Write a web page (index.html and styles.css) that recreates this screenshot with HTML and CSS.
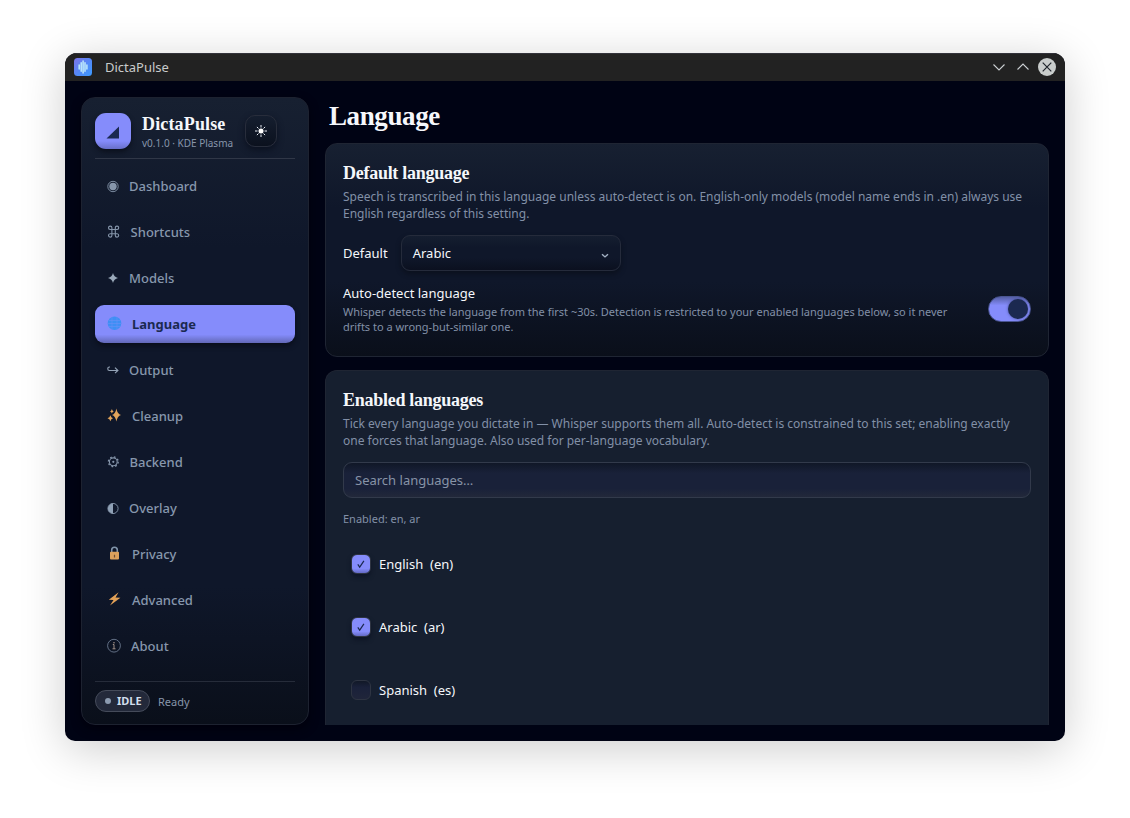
FILE: index.html
```html
<!DOCTYPE html>
<html lang="en">
<head>
<meta charset="utf-8">
<title>DictaPulse</title>
<link rel="stylesheet" href="styles.css">
</head>
<body>
<div class="window">
  <header class="titlebar">
    <svg class="app-icon" width="18" height="18" viewBox="0 0 18 18">
      <defs><linearGradient id="g" x1="0" y1="0" x2="1" y2="1"><stop offset="0" stop-color="#7d74e8"/><stop offset=".55" stop-color="#5289f8"/><stop offset="1" stop-color="#3c9bff"/></linearGradient></defs>
      <rect width="18" height="18" rx="3.5" fill="url(#g)"/>
      <path d="M5.2 7v4M7.2 4.8v8.4M9.1 3v12M11 4.8v8.4M12.9 7v4" stroke="#b8e4fb" stroke-width="1.6" stroke-linecap="round"/>
    </svg>
    <span class="window-name">DictaPulse</span>
    <div class="controls">
      <svg width="18" height="18" viewBox="0 0 18 18"><path d="M3.5 6.5 9 12l5.500-5.500" class="line"/></svg>
      <svg width="18" height="18" viewBox="0 0 18 18"><path d="M3.500 11.500 9 6l5.500 5.500" class="line"/></svg>
      <svg width="18" height="18" viewBox="0 0 18 18"><circle cx="9" cy="9" r="9" fill="#c9cdcc"/><path d="m4.700 4.700 8.600 8.600m0-8.600-8.600 8.600" stroke="#20252d" stroke-width="1.200"/></svg>
    </div>
  </header>
  <div class="body">
    <aside class="sidebar">
      <div class="brand">
        <div class="logo"><svg width="14" height="14" viewBox="0 0 14 14"><path d="M13 .5v12H.5z" fill="#1b2950"/></svg></div>
        <div class="brand-text"><div class="brand-name">DictaPulse</div><div class="version">v0.1.0 · KDE Plasma</div></div>
        <div class="theme"><svg width="14" height="14" viewBox="0 0 14 14"><circle cx="7" cy="7" r="2.500" fill="#fff"/><path d="M7 1v2.500M7 10.500V13M1 7h2.500M10.500 7H13M2.900 2.900l1.600 1.600M9.500 9.500l1.600 1.600M2.900 11.100l1.600-1.600M9.500 4.500l1.600-1.600" stroke="#e8edf5" stroke-width="1"/></svg></div>
      </div>
      <nav class="nav">
        <div class="item"><svg class="i12" viewBox="0 0 12 14"><circle cx="6" cy="7.500" r="5.200" fill="none" stroke="#8696ab" stroke-width=".9"/><circle cx="6" cy="7.500" r="3.700" fill="#8696ab"/></svg>Dashboard</div>
        <div class="item"><svg class="i13" viewBox="0 0 13 14"><path d="M4.900 4.500h3.400v4.200H4.900zM4.900 4.500H3.100a1.700 1.700 0 1 1 1.800-1.700zM8.300 4.500V2.800a1.700 1.700 0 1 1 1.800 1.700zM8.300 8.700h1.800a1.700 1.700 0 1 1-1.800 1.700zM4.900 8.700v1.700a1.700 1.700 0 1 1-1.800-1.700z" fill="none" stroke="#8696ab" stroke-width="1.100"/></svg><span class="shift">Shortcuts</span></div>
        <div class="item"><svg class="i12" viewBox="0 0 12 14"><path d="M6 2Q6.900 6.100 11 7 6.900 7.900 6 12 5.100 7.900 1 7 5.100 6.100 6 2z" fill="#9aa9ba"/></svg>Models</div>
        <div class="item active"><svg class="i15" viewBox="0 0 15 14"><circle cx="7.500" cy="6.200" r="6.800" fill="#3e8ff5"/><path d="M2 3.500h11M1 6.500h13M2 9.500h11M5 0v12.500M10 0v12.500" fill="none" stroke="#6c91f8" stroke-width=".55"/></svg>Language</div>
        <div class="item"><svg class="i12" viewBox="0 0 12 14"><path d="M3 4H2.500a1.700 1.700 0 0 0 0 3.500h8M8 4.600l2.900 2.900L8 10.100" fill="none" stroke="#94a3b6" stroke-width="1.150"/></svg>Output</div>
        <div class="item"><svg class="i15" viewBox="0 0 15 14"><g fill="#e2a45b"><path d="M9.400-.5Q10.200 4.800 14 6 10.200 7.200 9.400 12.600 8.500 7.200 5 6 8.500 4.800 9.400-.5z"/><path d="M4.900.1Q5.200 1.900 6.700 2.400 5.200 3 4.900 4.600 4.500 3 3.100 2.400 4.500 1.900 4.900.1zM3.400 6.300Q4 8.600 6 9.200 4 9.800 3.400 12.300 2.800 9.800.5 9.200 2.800 8.600 3.400 6.300z"/></g></svg>Cleanup</div>
        <div class="item"><svg class="i13" viewBox="0 0 13 14"><circle cx="6.300" cy="6.800" r="3.900" fill="none" stroke="#8696ab" stroke-width="1.100"/><circle cx="6.300" cy="6.800" r="1.100" fill="#8696ab"/><circle cx="6.300" cy="6.800" r="4.900" fill="none" stroke="#8696ab" stroke-width="1.300" stroke-dasharray="1.700 2.148"/></svg><span class="pull">Backend</span></div>
        <div class="item"><svg class="i12" viewBox="0 0 12 14"><circle cx="6" cy="7.500" r="5.100" fill="none" stroke="#8696ab" stroke-width=".9"/><path d="M6 2.400a5.100 5.100 0 0 0 0 10.200z" fill="#8fa1b6"/></svg>Overlay</div>
        <div class="item"><svg class="i15" viewBox="0 0 15 14"><path d="M4.700 5.500V3a2.800 2.800 0 0 1 5.600 0v2.500" fill="none" stroke="#8094aa" stroke-width="1.600"/><rect x="3" y="4.800" width="9" height="7.800" rx="1" fill="#dda15c"/><path d="M7.500 7.700v2.800" stroke="#704d30" stroke-width="1.200"/></svg>Privacy</div>
        <div class="item"><svg class="i15" viewBox="0 0 15 14"><path d="M11.600-.7 1.800 6.800l4.700.3L3 12.500l10.400-7.800-4.900-.2z" fill="#e3a157"/></svg>Advanced</div>
        <div class="item"><svg class="i14" viewBox="0 0 14 14"><circle cx="7" cy="6.700" r="6.400" fill="none" stroke="#77869d" stroke-width=".8"/><circle cx="7" cy="3.700" r=".8" fill="#a19088"/><path d="M5.800 5.500H7v4.300M5.500 9.800h3" fill="none" stroke="#a19088"/></svg>About</div>
      </nav>
      <div class="status"><span class="badge"><i class="dot"></i>IDLE</span><span class="ready">Ready</span></div>
    </aside>
    <main class="main">
      <h1>Language</h1>
      <section class="card first">
        <h2>Default language</h2>
        <p class="desc">Speech is transcribed in this language unless auto-detect is on. English-only models (model name ends in .en) always use<br>English regardless of this setting.</p>
        <div class="field"><span>Default</span><div class="select"><span>Arabic</span><svg width="8" height="6" viewBox="0 0 8 6"><path d="m1 1.200 3 2.700 3-2.700" fill="none" stroke="#a4b2c5" stroke-width="1.400"/></svg></div></div>
        <div class="auto"><div><div>Auto-detect language</div><p class="hint">Whisper detects the language from the first ~30s. Detection is restricted to your enabled languages below, so it never<br>drifts to a wrong-but-similar one.</p></div><div class="switch"><i class="knob"></i></div></div>
      </section>
      <section class="card second">
        <h2>Enabled languages</h2>
        <p class="desc">Tick every language you dictate in — Whisper supports them all. Auto-detect is constrained to this set; enabling exactly<br>one forces that language. Also used for per-language vocabulary.</p>
        <div class="search">Search languages…</div>
        <div class="enabled">Enabled: en, ar</div>
        <div class="option"><span class="check on"><svg width="10" height="10" viewBox="0 0 10 10"><path d="m1.800 5.300 1.900 2.800L7.900 1.800" fill="none" stroke="#1b2950" stroke-width="1.200"/></svg></span><span>English&nbsp; (en)</span></div>
        <div class="option"><span class="check on"><svg width="10" height="10" viewBox="0 0 10 10"><path d="m1.800 5.300 1.900 2.800L7.900 1.800" fill="none" stroke="#1b2950" stroke-width="1.200"/></svg></span><span>Arabic&nbsp; (ar)</span></div>
        <div class="option"><span class="check"></span><span>Spanish&nbsp; (es)</span></div>
      </section>
    </main>
  </div>
</div>
</body>
</html>
```
FILE: styles.css
```css
* { box-sizing: border-box; }
body { margin: 0; width: 1130px; height: 818px; overflow: hidden; background: #fff; padding: 53px 65px; font: 13px/18px "Noto Sans", sans-serif; color: #f5f7fb; }
h1, h2, p { margin: 0; }
svg { display: block; flex: none; overflow: visible; }
.window { width: 1000px; height: 688px; border-radius: 12px 12px 10px 10px; overflow: hidden; background: #000314; box-shadow: 0 8px 46px rgba(0,0,0,.2); display: flex; flex-direction: column; }
.titlebar { height: 28px; flex: none; background: #222; box-shadow: inset 0 1px #32323a; display: flex; align-items: center; padding: 0 9px; color: #c9cbcb; }
.window-name { margin-left: 13px; }
.controls { margin-left: auto; display: flex; gap: 6px; }
.line { fill: none; stroke: #c9cdd0; stroke-width: 1.1; }
.body { flex: 1; min-height: 0; display: flex; gap: 16px; padding: 16px; }
.sidebar { width: 228px; flex: none; border: 1px solid #1d2230; border-radius: 14px; padding: 15px 13px 12px; background: linear-gradient(#172031 0, #0f172a 24%, #0f172a 78%, #0a0f1a 100%); box-shadow: 0 4px 10px #00000c; display: flex; flex-direction: column; }
.brand { height: 46px; border-bottom: 1px solid #303747; display: flex; align-items: flex-start; }
.logo { width: 36px; height: 36px; border-radius: 11px; background: linear-gradient(#858cfb 78%, #686fc9); display: flex; align-items: center; justify-content: center; padding-top: 4px; box-shadow: 0 3px 5px #0b101c; }
.brand-text { margin-left: 11px; width: 103px; }
.brand-name { font: bold 18px/22px "Liberation Serif", serif; white-space: nowrap; letter-spacing: .15px; }
.version { font-size: 10px; line-height: 14px; color: #8795aa; margin-top: 1px; white-space: nowrap; }
.theme { width: 32px; height: 32px; margin-top: 2px; border: 1px solid #282d3b; border-radius: 10px; background: linear-gradient(#151e2f, #0b111e); display: grid; place-items: center; box-shadow: 0 3px 6px #0b1120; }
.nav { display: flex; flex-direction: column; gap: 8px; margin-top: 8px; font-weight: 500; color: #8797ad; }
.item { height: 38px; display: flex; align-items: center; gap: 10px; padding-left: 12px; border-radius: 9px; }
.item.active { color: #1b2950; font-weight: 700; background: linear-gradient(#858cfb 78%, #6268b7); box-shadow: 0 3px 5px #090e1b; }
.i12 { width: 12px; height: 14px; }
.i13 { width: 13px; height: 14px; }
.i14 { width: 14px; height: 14px; }
.i15 { width: 15px; height: 14px; }
.shift { margin-left: .6px; }
.pull { margin-left: -.5px; }
.status { margin-top: auto; border-top: 1px solid #262c3a; padding-top: 8px; display: flex; align-items: center; gap: 8px; }
.badge { width: 55px; height: 22px; border: 1px solid #454b5a; border-radius: 11px; background: #23293a; color: #d1deed; font-weight: 700; font-size: 11px; display: flex; align-items: center; gap: 6px; padding-left: 9px; }
.dot { width: 6px; height: 6px; border-radius: 50%; background: #8c9bb0; }
.ready { font-size: 11px; color: #8795aa; padding-top: 1px; }
.main { width: 724px; display: flex; flex-direction: column; overflow: hidden; }
h1 { height: 46px; font: bold 27px/38px "Liberation Serif", serif; padding-left: 4px; letter-spacing: -.4px; }
h2 { font: bold 18px/24px "Liberation Serif", serif; letter-spacing: -.27px; }
.card { border: 1px solid #1f2533; border-radius: 12px; padding: 17px; }
.first { height: 214px; flex: none; background: linear-gradient(#172031 0, #0f172a 30%, #0f172a 65%, #0a0f1a 100%); }
.second { flex: 1; min-height: 0; margin-top: 13px; border-bottom: 0; border-radius: 12px 12px 0 0; background: #161f2f; }
.desc { font-size: 12px; line-height: 17px; color: #8290a7; white-space: nowrap; margin-top: 3px; letter-spacing: -.008px; }
.field { display: flex; align-items: center; gap: 13px; margin-top: 13px; }
.select { width: 220px; height: 36px; border: 1px solid #252b3b; border-radius: 9px; background: linear-gradient(#151e30, #0f172a 35%, #0f172a 65%, #0b101f); display: flex; align-items: center; justify-content: space-between; padding: 0 11px; box-shadow: 0 3px 5px #0b111e; }
.select svg { margin-top: 5px; }
.auto { display: flex; justify-content: space-between; margin-top: 13px; }
.hint { font-size: 11px; line-height: 15px; color: #8290a7; white-space: nowrap; margin-top: 2px; letter-spacing: -.008px; }
.switch { width: 43px; height: 26px; border: 1px solid #4a5592; border-radius: 13px; background: linear-gradient(#555fa6, #858cfb 35%); margin-top: 12px; display: flex; align-items: center; justify-content: flex-end; padding-right: 2px; }
.knob { width: 20px; height: 20px; border-radius: 50%; background: #1b2950; box-shadow: 0 0 3px #454e96; }
.search { height: 36px; margin-top: 13px; border: 1px solid #323a4b; border-radius: 9px; background: linear-gradient(#101727, #192139 30%, #192139 75%, #22283a); color: #8793a7; padding: 8px 11px; }
.enabled { font-size: 11px; line-height: 16px; color: #8290a7; margin-top: 13px; }
.option { height: 20px; display: flex; align-items: center; gap: 8px; margin: 27px 0 43px 8px; }
.option + .option { margin-top: 0; }
.check { width: 20px; height: 20px; border: 1px solid #2e3442; border-radius: 6px; background: linear-gradient(#111827, #1a213a 35%, #20253a); display: grid; place-items: center; }
.check.on { background: linear-gradient(#858cfb 75%, #646ac4); box-shadow: 0 3px 4px #0e1525; }
```
